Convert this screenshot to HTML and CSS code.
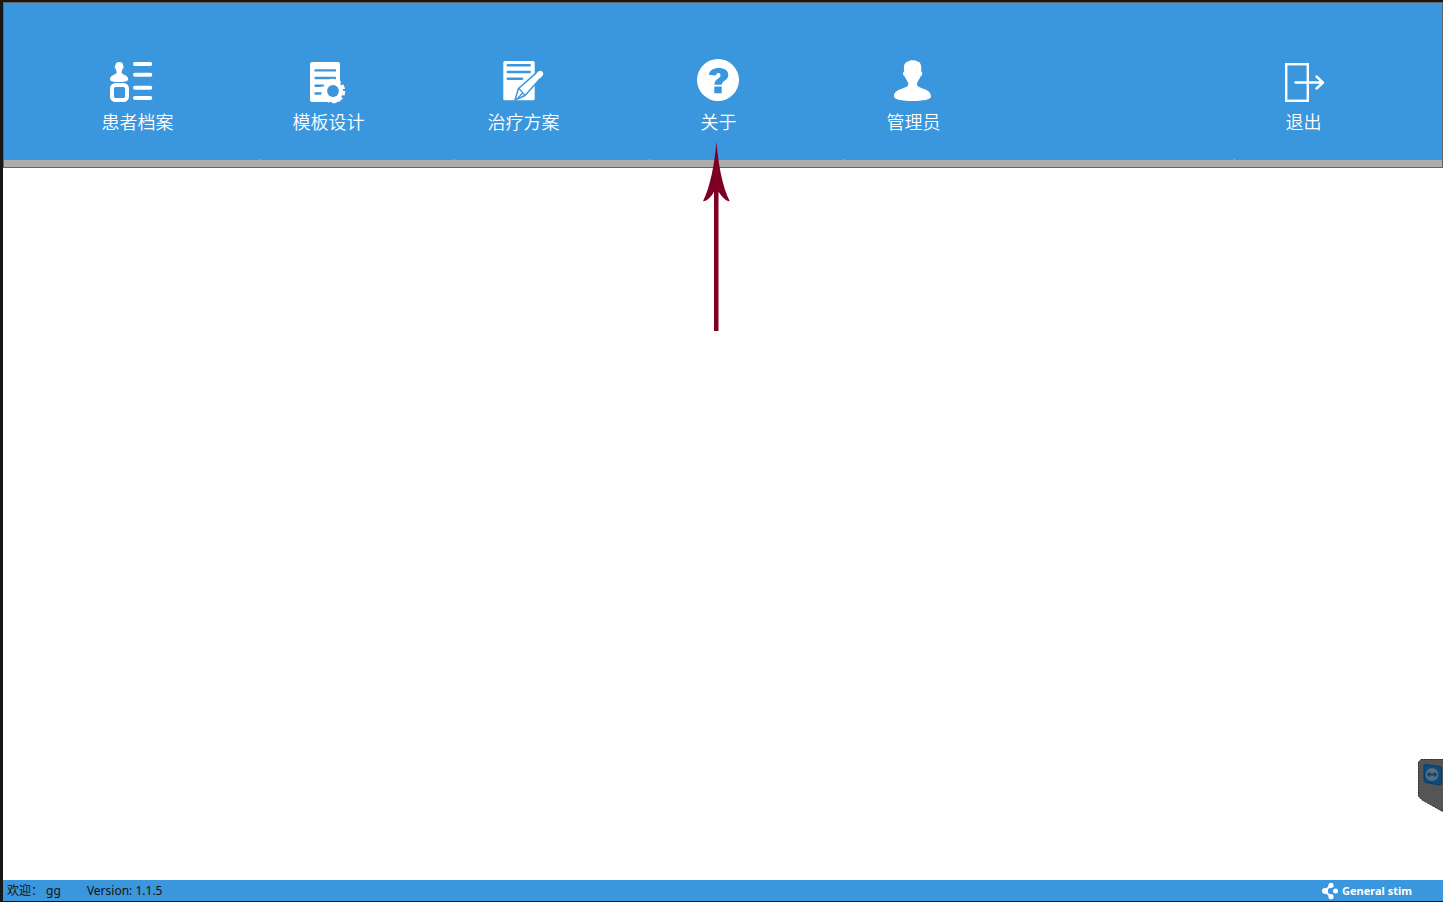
FILE: index.html
```html
<!DOCTYPE html>
<html lang="zh-CN">
<head>
<meta charset="utf-8">
<title>General stim</title>
<link rel="stylesheet" href="styles.css">
</head>
<body>
<div class="window">
  <header class="toolbar">
    <nav>
      <ul class="menu">
        <li class="cell tick">
          <button class="item" type="button">
            <svg class="icon" viewBox="0 0 61 48" aria-hidden="true">
              <path class="solid" d="M12.3 6C15 6 16.2 7.6 16.2 10C17.2 10.300 16.600 12.500 15.700 12.800C15.300 14.400 14.600 15 14.600 16.500C14.600 18.800 21.200 18.600 21.200 23.200C21.200 25.500 16.500 26 12 26S3 25.500 3 23.200C3 18.600 9.700 18.800 9.700 16.500C9.700 15 9 14.400 8.700 12.800C7.700 12.500 7.400 10.300 8.300 10C8.300 7.600 9.600 6 12.300 6Z"/>
              <rect class="line" x="5" y="29" width="15" height="15" rx="3.500" stroke-width="4"/>
              <path class="line" d="M28 8H43.300M28 18.700H43.300M28 31.700H43.300M28 42H43.300" stroke-width="4"/>
            </svg>
            <span class="label">患者档案</span>
          </button>
        </li>
        <li class="cell tick">
          <button class="item" type="button">
            <svg class="icon" viewBox="0 0 61 48" aria-hidden="true">
              <rect class="solid" x="12" y="6" width="30" height="40" rx="2"/>
              <path class="cut" d="M17.500 14.400H37M17.500 22H37M17.500 29.800H25M17.500 37.500H23" stroke-width="2.400"/>
              <circle class="solid" cx="35" cy="35" r="10.300"/>
              <circle cx="35" cy="35" r="11" fill="none" stroke="#fff" stroke-width="2.600" stroke-dasharray="4.400 2.512"/>
              <circle class="hole" cx="35" cy="35" r="5.900"/>
            </svg>
            <span class="label">模板设计</span>
          </button>
        </li>
        <li class="cell tick">
          <button class="item" type="button">
            <svg class="icon" viewBox="0 0 61 48" aria-hidden="true">
              <rect class="solid" x="10.300" y="5" width="31.400" height="39.300" rx="1.500"/>
              <path class="cut" d="M14.800 9.300H36.700M14.800 16H36.700M14.800 22.800H29" stroke-width="2.500"/>
              <path d="M22 44L25.500 32.500L45 15.400C47 13.300 51.500 17 49.800 19.800L32 39.500Z" fill="#fff" stroke="#3a96dd" stroke-width="1.500" stroke-linejoin="round"/>
              <path class="cut" d="M26 32.500L31.600 39M29.500 37L25 42" stroke-width="1.200"/>
              <path class="solid" d="M43.500 17.500C45 15.500 46 14.800 47.500 14.800C49.500 15 50.700 17 50.100 18.800L47.500 22Z"/>
            </svg>
            <span class="label">治疗方案</span>
          </button>
        </li>
        <li class="cell tick">
          <button class="item" type="button">
            <svg class="icon" viewBox="0 0 61 48" aria-hidden="true">
              <circle class="solid" cx="30" cy="24" r="21"/>
              <path class="hole" d="M20.800 18.700C21.500 14.300 25.500 12 30.500 12C36.500 12 40.300 14.600 40.300 19C40.300 24.500 33.800 24.500 33.800 28.700H26.500C26.300 22.500 32.500 23 32.500 19.500C32.500 16.300 28.500 16.300 27.800 19.600ZM26.300 30.400H33.700V37.200H26.300Z"/>
            </svg>
            <span class="label">关于</span>
          </button>
          <svg class="pointer" viewBox="0 0 28 189" aria-hidden="true">
            <path d="M13.400 0C15.500 22 19 44 26.800 59.300C22 59 17.500 53 15.500 49.500V189H11V49.500C9.500 53 5 59 0 59.300C7.500 44 11.500 22 13.400 0Z"/>
          </svg>
        </li>
        <li class="cell">
          <button class="item" type="button">
            <svg class="icon" viewBox="0 0 61 48" aria-hidden="true">
              <path class="solid" d="M25 5.500C27 4 32 3.500 34.500 5.500C37.500 6 38.700 9 38.200 15.500C40.200 16 39.300 20 37.300 20.800C36.500 23.500 34 25.500 34 28C34 33.500 48 31.500 48 40.500C48 43.500 40 45 29.500 45S11 43.500 11 40.500C11 31.500 25.300 33.500 25.300 28C25.300 25.500 22.700 23.500 22 20.800C20 20 19.200 16 21.200 15.500C20.500 10 21 6.500 25 5.500Z"/>
            </svg>
            <span class="label">管理员</span>
          </button>
        </li>
        <li class="cell tick"></li>
        <li class="cell">
          <button class="item" type="button">
            <svg class="icon" viewBox="0 0 61 48" aria-hidden="true">
              <rect x="13.200" y="8.200" width="21.600" height="36.600" fill="none" stroke="#fff" stroke-width="2.400"/>
              <path class="line" d="M22.500 26.600H49.500M43.500 20.500L50 26.600L43.500 32.500" stroke-width="2.500"/>
            </svg>
            <span class="label">退出</span>
          </button>
        </li>
      </ul>
    </nav>
  </header>
  <main class="workspace">
    <button class="remote" type="button" aria-label="TeamViewer">
      <svg class="remote-art" viewBox="0 0 25 53" aria-hidden="true">
        <path d="M3 0H25V53L4 41L0 37V3Z" fill="#555"/>
        <path d="M3 .5H25M.5 3V37L4 41L25 52.500" fill="none" stroke="#333" stroke-dasharray="2 1"/>
        <path d="M7.500 5.500L22 7.500Q23.500 8 23.500 9.500V24Q23.500 26 21.500 26L8 23.500Q6 23 6 21.500V7Q6 5.500 7.500 5.500Z" fill="#0a4c80" stroke="#063d68"/>
        <circle cx="14" cy="15.500" r="6.500" fill="#5f6d76"/>
        <path d="M8.500 15.500L12 12.500V14.500H16V12.500L19.500 15.500L16 18.500V16.500H12V18.500Z" fill="#0a4674"/>
      </svg>
    </button>
  </main>
  <footer class="status">
    <span>欢迎： gg</span>
    <span>Version: 1.1.5</span>
    <div class="brand">
      <svg class="brand-mark" viewBox="0 0 17 18" aria-hidden="true">
        <path d="M9 3L3 9L9 15" fill="none" stroke="#fff" stroke-width="2"/>
        <circle cx="3" cy="9" r="3" fill="#fff"/>
        <circle cx="9" cy="3.300" r="2.600" fill="#fff"/>
        <circle cx="9" cy="14.700" r="2.600" fill="#fff"/>
        <circle cx="13.500" cy="9" r="2.500" fill="#fff"/>
      </svg>
      <span>General stim</span>
    </div>
  </footer>
</div>
</body>
</html>
```
FILE: styles.css
```css
* {
  box-sizing: border-box;
}

body {
  margin: 0;
  background: #171717;
  font-family: "Noto Sans", "Noto Sans CJK TC", sans-serif;
}

button {
  padding: 0;
  border: 0;
  background: none;
  font: inherit;
  color: inherit;
  cursor: pointer;
}

.window {
  display: flex;
  flex-direction: column;
  min-height: 100vh;
  padding: 2px 0 1px 3px;
}

.toolbar {
  border: 1px solid #666;
  background: #3a96dd;
}

.menu {
  display: grid;
  grid-template-columns: 187fr repeat(6, 195fr);
  margin: 0;
  padding: 0 41px 0 40px;
  border-bottom: 7px solid #adadad;
  list-style: none;
}

.cell {
  position: relative;
  display: flex;
  justify-content: center;
  padding: 53px 0 27px;
}

.tick::after {
  content: "";
  position: absolute;
  right: -29px;
  bottom: 0;
  width: 1px;
  height: 1px;
  background: #9dc4e2;
}

.item {
  display: flex;
  flex-direction: column;
  align-items: center;
  gap: 5px;
  color: #fff;
}

.icon {
  width: 61px;
  height: 48px;
}

.solid {
  fill: #fff;
}

.hole {
  fill: #3a96dd;
}

.line {
  fill: none;
  stroke: #fff;
  stroke-linecap: round;
  stroke-linejoin: round;
}

.cut {
  fill: none;
  stroke: #3a96dd;
  stroke-linecap: round;
}

.label {
  font-family: "Noto Sans CJK SC", sans-serif;
  font-size: 18px;
  font-weight: 350;
  line-height: 24px;
}

.pointer {
  position: absolute;
  z-index: 1;
  top: 139px;
  left: calc(50% - 16px);
  width: 28px;
  height: 189px;
  fill: #7d0022;
  pointer-events: none;
}

.workspace {
  position: relative;
  flex: 1;
  background: #fefefe;
}

.remote {
  position: absolute;
  right: 0;
  bottom: 68px;
  width: 25px;
  height: 53px;
}

.remote-art {
  display: block;
  width: 25px;
  height: 53px;
}

.status {
  display: flex;
  align-items: center;
  gap: 26px;
  padding: 1px 31px 0 4px;
  background: #3a96dd;
  color: #111;
  font-size: 12px;
  line-height: 20px;
}

.brand {
  display: flex;
  align-items: center;
  gap: 3px;
  margin-left: auto;
  color: #fff;
  font-size: 11px;
  font-weight: 700;
}

.brand-mark {
  width: 17px;
  height: 18px;
}
```
